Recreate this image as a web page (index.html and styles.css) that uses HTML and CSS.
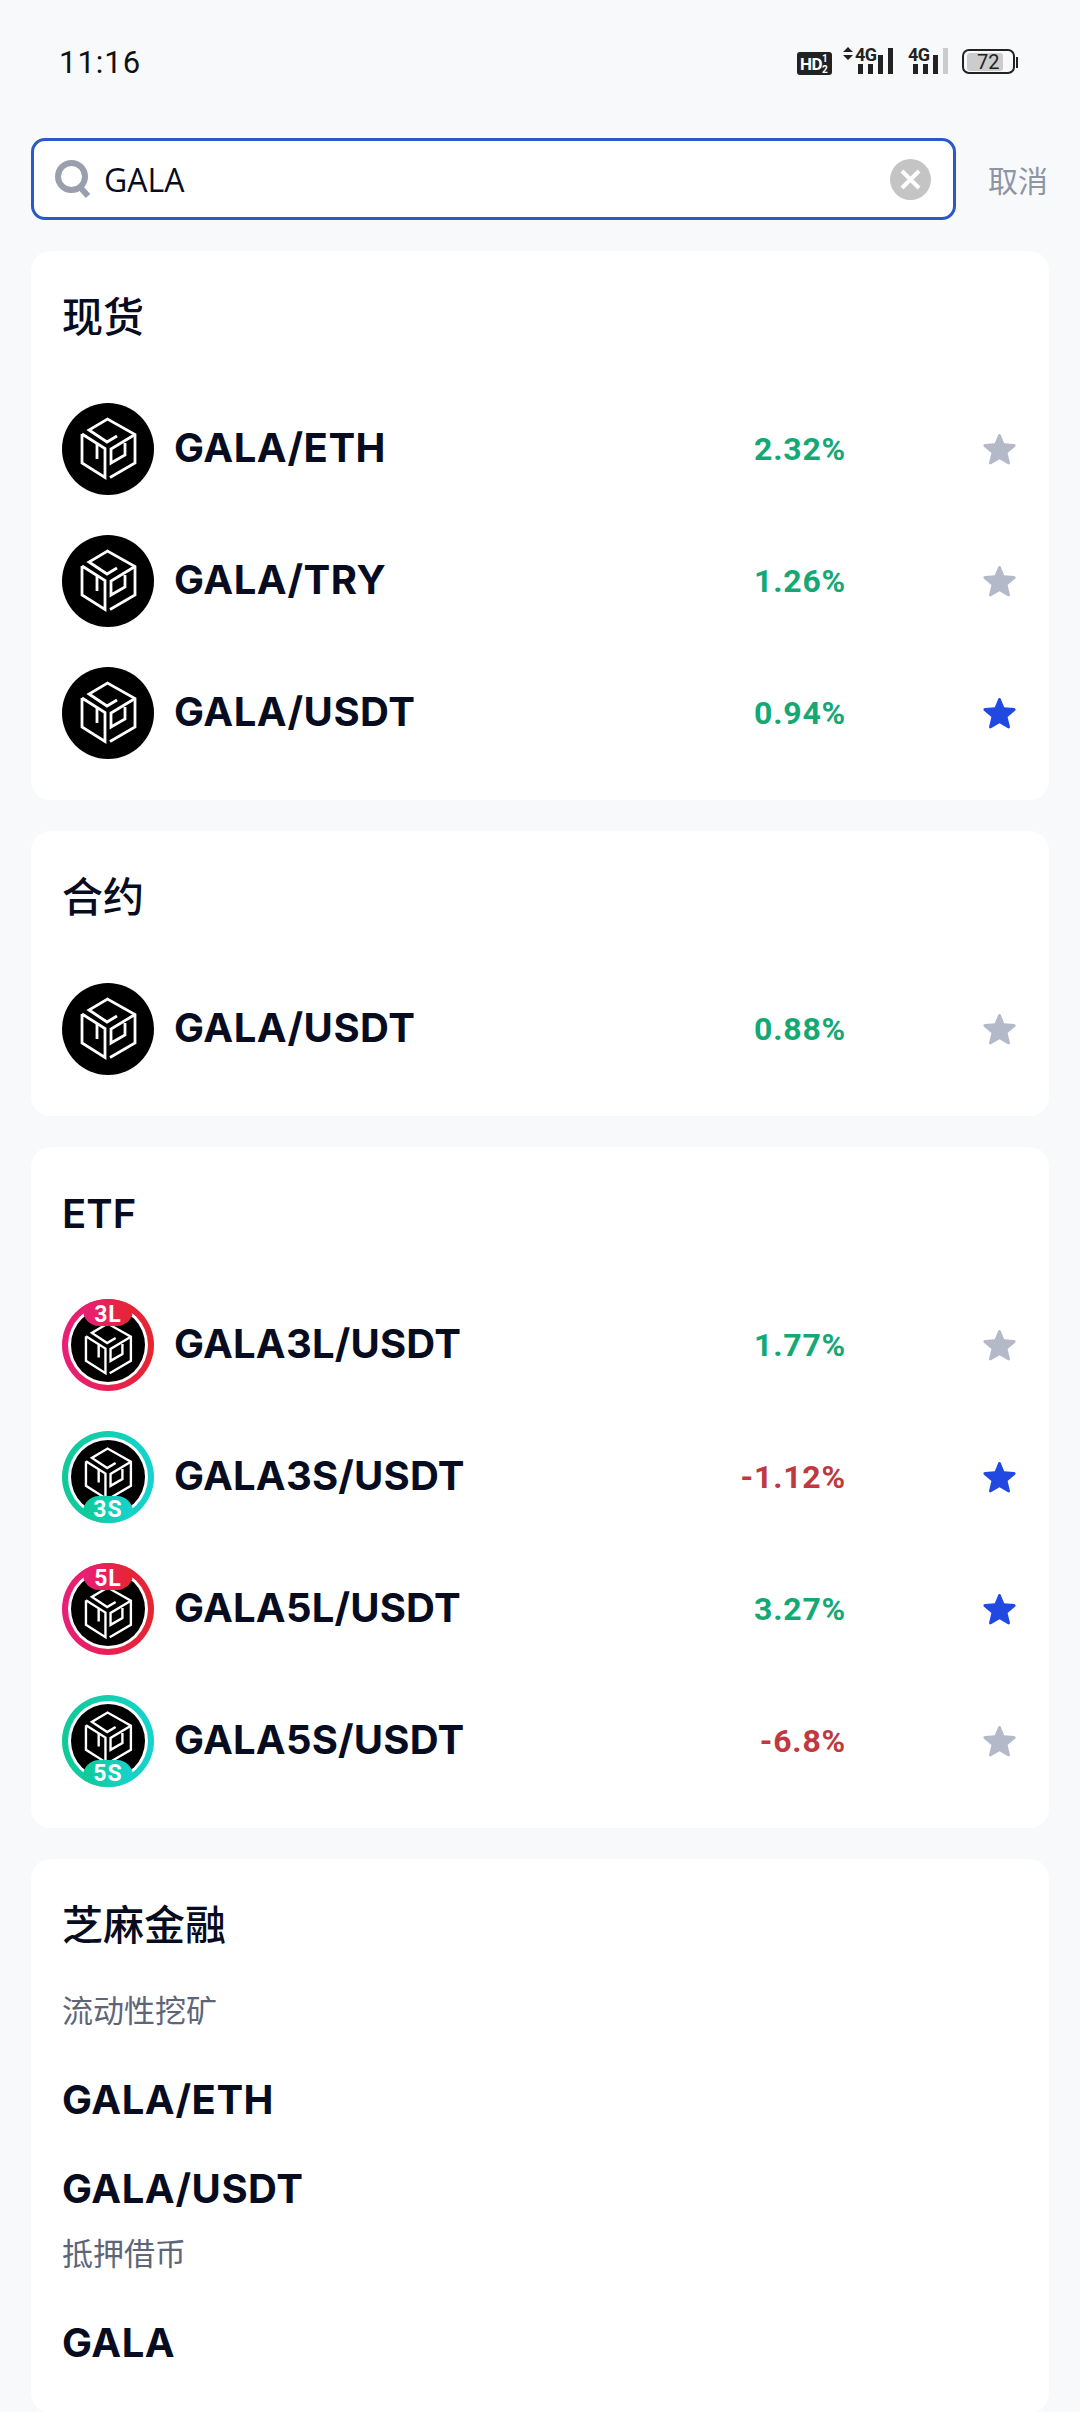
FILE: index.html

```html
<!DOCTYPE html>
<html lang="zh-CN">
<head>
  <meta charset="UTF-8">
  <meta name="viewport" content="width=device-width, initial-scale=1.0">
  <title>搜索</title>
  <link rel="stylesheet" href="styles.css">
</head>
<body>
  <svg class="sprite" aria-hidden="true">
    <symbol id="cube" viewBox="0 0 92 92">
      <g fill="none" stroke="#fff" stroke-width="2.800">
        <path d="M55 33 L45 39 L27 27 L45.500 16 L73 31.500 V60 L48 74.500"/>
        <path d="M73 31.500 L49 46 V60 L63 52 V40"/>
        <path d="M20 31 L43 45.500 V74.500 L20 60 V31"/>
        <path d="M35 41 V56"/>
      </g>
    </symbol>
    <symbol id="star" viewBox="0 0 33 32">
      <path d="M16.5 1 C17.2 1 17.6 1.5 17.9 2.2 L21.2 10.2 L30.9 11 C32.6 11.2 33.2 12.6 32 13.7 L24.6 20 L26.9 29.4 C27.3 31 26 32 24.6 31.1 L16.5 26.2 L8.4 31.1 C7 32 5.7 31 6.1 29.4 L8.4 20 L1 13.7 C-0.2 12.6 0.4 11.2 2.1 11 L11.8 10.2 L15.1 2.2 C15.4 1.5 15.8 1 16.5 1 Z"/>
    </symbol>
  </svg>

  <!-- 状态栏 -->
  <div class="status-bar">
    <span class="time">11:16</span>
    <svg class="status-icons" width="222" height="36" viewBox="0 0 222 36">
      <rect x="0" y="8" width="35" height="23" rx="3" fill="#222"/>
      <text x="3" y="26" class="hd">HD</text>
      <text x="25" y="18" class="hd-num">1</text>
      <text x="25" y="29" class="hd-num">2</text>
      <path d="M46 8 H56 L51 3 Z M46 11 H56 L51 16 Z" fill="#222"/>
      <text x="58" y="17" class="net">4G</text>
      <path d="M61 20h5v10h-5z M71 20h5v10h-5z M81 11h5v19h-5z M91 4h5v26h-5z" fill="#222"/>
      <text x="111" y="17" class="net">4G</text>
      <path d="M116 20h5v10h-5z M126 20h5v10h-5z M136 11h5v19h-5z" fill="#222"/>
      <path d="M146 4h5v26h-5z" fill="#ccc"/>
      <rect x="166" y="6" width="51" height="23" rx="6" fill="none" stroke="#222" stroke-width="2"/>
      <rect x="170" y="9" width="36" height="18" rx="3" fill="#ccc"/>
      <text x="180" y="25" class="batt">72</text>
      <rect x="219" y="13" width="2" height="11" fill="#222"/>
    </svg>
  </div>

  <!-- 搜索 -->
  <div class="search-row">
    <div class="search-box">
      <svg class="search-icon" width="36" height="38" viewBox="0 0 36 38">
        <circle cx="16.5" cy="16.5" r="13.5" fill="none" stroke="#9a9fae" stroke-width="6"/>
        <path d="M25 27 L33 36" stroke="#9a9fae" stroke-width="6" fill="none"/>
      </svg>
      <span class="search-text">GALA</span>
      <svg class="clear-icon" width="41" height="41" viewBox="0 0 41 41">
        <circle cx="20.5" cy="20.5" r="20.5" fill="#c4c4c4"/>
        <path d="M12 12 L29 29 M29 12 L12 29" stroke="#fff" stroke-width="4" fill="none"/>
      </svg>
    </div>
    <span class="cancel">取消</span>
  </div>

  <!-- 现货 -->
  <section class="card">
    <h2 class="card-title">现货</h2>
    <div class="row">
      <svg class="logo"><use href="#cube"/></svg>
      <span class="name">GALA/ETH</span>
      <span class="pct up">2.32%</span>
      <svg class="star"><use href="#star"/></svg>
    </div>
    <div class="row">
      <svg class="logo"><use href="#cube"/></svg>
      <span class="name">GALA/TRY</span>
      <span class="pct up">1.26%</span>
      <svg class="star"><use href="#star"/></svg>
    </div>
    <div class="row">
      <svg class="logo"><use href="#cube"/></svg>
      <span class="name">GALA/USDT</span>
      <span class="pct up">0.94%</span>
      <svg class="star on"><use href="#star"/></svg>
    </div>
  </section>

  <!-- 合约 -->
  <section class="card">
    <h2 class="card-title">合约</h2>
    <div class="row">
      <svg class="logo"><use href="#cube"/></svg>
      <span class="name">GALA/USDT</span>
      <span class="pct up">0.88%</span>
      <svg class="star"><use href="#star"/></svg>
    </div>
  </section>

  <!-- ETF -->
  <section class="card">
    <h2 class="card-title latin">ETF</h2>
    <div class="row etf-row">
      <div class="etf-logo long top">
        <div class="etf-inner"><svg class="etf-cube"><use href="#cube"/></svg></div>
        <span class="tag">3L</span>
      </div>
      <span class="name">GALA3L/USDT</span>
      <span class="pct up">1.77%</span>
      <svg class="star"><use href="#star"/></svg>
    </div>
    <div class="row etf-row">
      <div class="etf-logo short bottom">
        <div class="etf-inner"><svg class="etf-cube"><use href="#cube"/></svg></div>
        <span class="tag">3S</span>
      </div>
      <span class="name">GALA3S/USDT</span>
      <span class="pct down">-1.12%</span>
      <svg class="star on"><use href="#star"/></svg>
    </div>
    <div class="row etf-row">
      <div class="etf-logo long top">
        <div class="etf-inner"><svg class="etf-cube"><use href="#cube"/></svg></div>
        <span class="tag">5L</span>
      </div>
      <span class="name">GALA5L/USDT</span>
      <span class="pct up">3.27%</span>
      <svg class="star on"><use href="#star"/></svg>
    </div>
    <div class="row etf-row">
      <div class="etf-logo short bottom">
        <div class="etf-inner"><svg class="etf-cube"><use href="#cube"/></svg></div>
        <span class="tag">5S</span>
      </div>
      <span class="name">GALA5S/USDT</span>
      <span class="pct down">-6.8%</span>
      <svg class="star"><use href="#star"/></svg>
    </div>
  </section>

  <!-- 芝麻金融 -->
  <section class="card finance">
    <h2 class="card-title">芝麻金融</h2>
    <p class="sub first">流动性挖矿</p>
    <div class="item name">GALA/ETH</div>
    <div class="item name">GALA/USDT</div>
    <p class="sub">抵押借币</p>
    <div class="item name">GALA</div>
  </section>
</body>
</html>
```

FILE: styles.css

```css
* {
  box-sizing: border-box;
}
html, body {
  height: 2412px;
  overflow: hidden;
}
body {
  margin: 0;
  background-color: #f8f9fb;
  color: #070c20;
  font-family: Inter, "Noto Sans CJK SC", sans-serif;
}
.sprite {
  position: absolute;
  width: 0;
  height: 0;
}
.status-bar {
  display: flex;
  align-items: center;
  justify-content: space-between;
  height: 124px;
  padding: 0 61px 0 59px;
}
.time {
  font-family: Roboto, sans-serif;
  font-size: 31px;
  letter-spacing: 1px;
  color: #111;
}
.hd {
  font: 700 17px Roboto, sans-serif;
  letter-spacing: -0.5px;
  fill: #fff;
}
.hd-num {
  font: 700 10px Roboto, sans-serif;
  fill: #fff;
}
.net {
  font: 700 18px Roboto, sans-serif;
  letter-spacing: -0.5px;
  fill: #222;
}
.batt {
  font: 400 20px Roboto, sans-serif;
  fill: #222;
}
.search-row {
  display: flex;
  align-items: center;
  margin: 14px 0 31px 31px;
}
.search-box {
  display: flex;
  align-items: center;
  width: 925px;
  height: 82px;
  padding: 0 22px 0 21px;
  background-color: #fff;
  border: 3px solid #2a59c9;
  border-radius: 14px;
}
.search-text {
  flex: 1;
  margin-left: 13px;
  font-family: "Open Sans", sans-serif;
  font-size: 32px;
}
.cancel {
  margin-left: 32px;
  font-size: 30px;
  color: #8e95a5;
}
.card {
  width: 1018px;
  margin: 0 0 31px 31px;
  padding: 36px 33px 21px 31px;
  background-color: #fff;
  border-radius: 20px;
}
.finance {
  padding-bottom: 23px;
}
.card-title {
  height: 60px;
  margin: 0 0 36px;
  font-size: 41px;
  font-weight: 500;
  line-height: 61px;
}
.card-title.latin {
  font-size: 40px;
  font-weight: 600;
}
.row {
  display: flex;
  align-items: center;
  height: 132px;
}
.logo {
  width: 92px;
  height: 92px;
  background-color: #000;
  border-radius: 50%;
}
.name {
  font-size: 40px;
  font-weight: 700;
  letter-spacing: 0.5px;
}
.row .name {
  flex: 1;
  margin-left: 20px;
  padding-bottom: 3px;
}
.etf-row .name {
  letter-spacing: 0.2px;
}
.pct {
  font-family: Roboto, sans-serif;
  font-size: 32px;
  font-weight: 700;
  letter-spacing: 0.8px;
}
.up {
  color: #14a874;
}
.down {
  color: #c0393f;
}
.star {
  width: 33px;
  height: 32px;
  margin-left: 137px;
  fill: #b3b9c8;
}
.star.on {
  fill: #2148e0;
}
.etf-logo {
  position: relative;
  display: flex;
  align-items: center;
  justify-content: center;
  width: 92px;
  height: 92px;
  overflow: hidden;
  border-radius: 50%;
}
.long {
  background: linear-gradient(90deg, #e91e7b, #e5252f);
}
.short {
  background: linear-gradient(90deg, #0fca96, #16d3cf);
}
.etf-inner {
  display: flex;
  align-items: center;
  justify-content: center;
  width: 74px;
  height: 74px;
  background-color: #000;
  border-radius: 50%;
  box-shadow: 0 0 0 3px #fff;
}
.etf-cube {
  flex: none;
  width: 78px;
  height: 78px;
}
.top .etf-cube {
  margin-top: 8px;
}
.bottom .etf-cube {
  margin-bottom: 6px;
}
.tag {
  position: absolute;
  left: 21px;
  width: 50px;
  height: 27px;
  font-family: Roboto, sans-serif;
  font-size: 23px;
  font-weight: 700;
  letter-spacing: 1px;
  line-height: 27px;
  text-align: center;
  color: #fff;
}
.long .tag {
  background: linear-gradient(90deg, #ea1e78, #e5252f);
}
.short .tag {
  background: linear-gradient(90deg, #0fca96, #16d3cf);
}
.top .tag {
  top: 0;
  line-height: 32px;
  border-radius: 0 0 16px 16px;
}
.bottom .tag {
  bottom: 0;
  border-radius: 16px 16px 0 0;
}
.sub {
  height: 40px;
  margin: -2px 0 27px;
  font-size: 31px;
  line-height: 40px;
  color: #5e6578;
}
.sub.first {
  margin-top: 30px;
}
.item {
  height: 89px;
  padding-bottom: 3px;
  line-height: 84px;
}
```
